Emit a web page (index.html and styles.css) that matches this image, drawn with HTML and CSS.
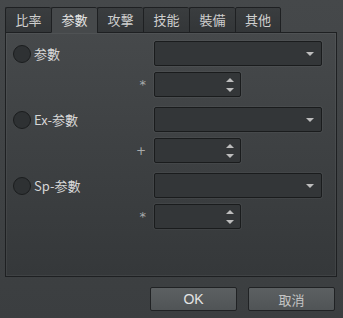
FILE: index.html
```html
<!DOCTYPE html>
<html>
<head>
<meta charset="utf-8">
<link rel="stylesheet" href="styles.css">
</head>
<body>
<div class="dialog">
  <div class="tabs">
    <div class="tab">比率</div>
    <div class="tab active">参數</div>
    <div class="tab">攻擊</div>
    <div class="tab">技能</div>
    <div class="tab">裝備</div>
    <div class="tab">其他</div>
  </div>
  <div class="panel">
    <div class="group">
      <div class="row">
        <div class="lead"><span class="radio"></span><span class="label">参數</span></div>
        <div class="combo"><span class="arrow-down"></span></div>
      </div>
      <div class="row">
        <div class="lead sign-lead"><span class="sign">*</span></div>
        <div class="spin"><span class="spin-arrows"><span class="arrow-up"></span><span class="arrow-down"></span></span></div>
      </div>
    </div>
    <div class="group">
      <div class="row">
        <div class="lead"><span class="radio"></span><span class="label">Ex-参數</span></div>
        <div class="combo"><span class="arrow-down"></span></div>
      </div>
      <div class="row">
        <div class="lead sign-lead"><span class="sign plus">+</span></div>
        <div class="spin"><span class="spin-arrows"><span class="arrow-up"></span><span class="arrow-down"></span></span></div>
      </div>
    </div>
    <div class="group">
      <div class="row">
        <div class="lead"><span class="radio"></span><span class="label">Sp-参數</span></div>
        <div class="combo"><span class="arrow-down"></span></div>
      </div>
      <div class="row">
        <div class="lead sign-lead"><span class="sign">*</span></div>
        <div class="spin"><span class="spin-arrows"><span class="arrow-up"></span><span class="arrow-down"></span></span></div>
      </div>
    </div>
  </div>
  <div class="buttons">
    <div class="btn">OK</div>
    <div class="btn cancel">取消</div>
  </div>
</div>
</body>
</html>
```

FILE: styles.css
```css
html, body {
  margin: 0;
  padding: 0;
}
body {
  width: 343px;
  height: 318px;
  background: linear-gradient(#45484a, #3b3e40);
  font-family: "Noto Sans CJK JP", "Noto Sans", sans-serif;
  font-size: 13px;
  color: #d4d4d4;
  overflow: hidden;
}
.dialog {
  display: flex;
  flex-direction: column;
  padding: 7px 6px 0 5px;
}
.tabs {
  display: flex;
  height: 25px;
  position: relative;
  z-index: 1;
}
.tab {
  width: 46px;
  box-sizing: border-box;
  height: 26px;
  border: 1px solid #1e2022;
  border-right: none;
  border-radius: 2px 2px 0 0;
  background: linear-gradient(#3a3d3f, #333638);
  display: flex;
  align-items: center;
  justify-content: center;
  line-height: 1;
  padding-bottom: 1px;
  color: #cfcfcf;
}
.tab:last-child {
  border-right: 1px solid #1e2022;
}
.tab.active {
  background: #46494b;
  border-bottom-color: #46494b;
  color: #e2e2e2;
}
.panel {
  box-sizing: border-box;
  width: 332px;
  height: 245px;
  border: 1px solid #1e2022;
  box-shadow: inset 0 0 0 1px rgba(255,255,255,0.05);
  background: linear-gradient(#46494b, #35383a);
  padding: 8px 14px 0 0;
  display: flex;
  flex-direction: column;
  gap: 10px;
}
.group {
  display: flex;
  flex-direction: column;
  gap: 6px;
}
.row {
  display: flex;
  align-items: center;
  height: 25px;
}
.lead {
  width: 148px;
  display: flex;
  align-items: center;
  padding-left: 7px;
  box-sizing: border-box;
}
.sign-lead {
  justify-content: flex-end;
  padding-right: 8px;
}
.radio {
  width: 18px;
  height: 18px;
  border-radius: 50%;
  background: #2e3133;
  border: 1px solid #1b1d1e;
  box-sizing: border-box;
  flex: none;
}
.label {
  margin-left: 3px;
  font-size: 13px;
  color: #d6d6d6;
}
.sign {
  font-family: "DejaVu Sans", sans-serif;
  font-size: 13px;
  color: #a8aaab;
  line-height: 1;
}
.sign.plus {
  font-size: 12px;
}
.combo, .spin {
  box-sizing: border-box;
  height: 25px;
  border: 1px solid #1a1c1d;
  border-radius: 2px;
  background: #333638;
  box-shadow: 0 0 0 1px rgba(255,255,255,0.04);
  display: flex;
  align-items: center;
  justify-content: flex-end;
}
.combo {
  width: 168px;
  padding-right: 7px;
}
.spin {
  width: 87px;
  padding-right: 6px;
}
.spin-arrows {
  display: flex;
  flex-direction: column;
  gap: 6px;
}
.arrow-down {
  width: 0;
  height: 0;
  border-left: 4px solid transparent;
  border-right: 4px solid transparent;
  border-top: 4px solid #bdbdbd;
}
.arrow-up {
  width: 0;
  height: 0;
  border-left: 4px solid transparent;
  border-right: 4px solid transparent;
  border-bottom: 4px solid #bdbdbd;
}
.buttons {
  display: flex;
  justify-content: flex-end;
  gap: 11px;
  margin-top: 10px;
  padding-right: 2px;
}
.btn {
  box-sizing: border-box;
  width: 87px;
  height: 24px;
  border: 1px solid #202224;
  border-radius: 2px;
  background: linear-gradient(#5c6062, #505456);
  display: flex;
  align-items: center;
  justify-content: center;
  font-family: "Liberation Sans", "Noto Sans CJK JP", sans-serif;
  font-size: 14px;
  color: #e4e4e4;
}
.btn.cancel {
  font-family: "Noto Sans CJK JP", sans-serif;
  font-size: 13px;
  color: #c4c4c4;
}
```
